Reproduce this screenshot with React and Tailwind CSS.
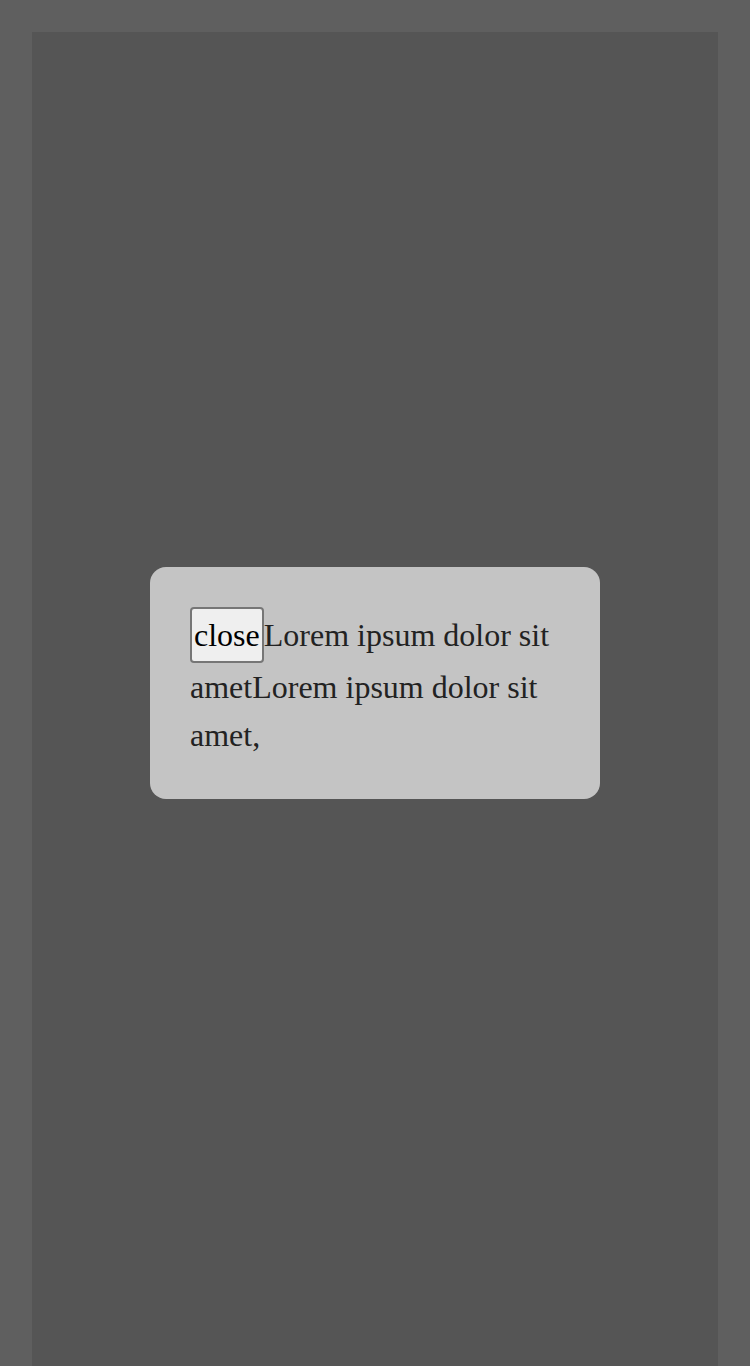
import React from 'react';

const App = () => {
  return (
    <div className="min-h-screen bg-[#5f5f5f] px-8 pt-8 font-['Liberation_Serif',serif]">
      <div className="h-[1334px] bg-[#555555]" />

      <div className="fixed inset-0 flex items-center justify-center">
        <div className="w-[450px] rounded-2xl bg-[#c4c4c4] p-10 text-[32px] leading-[48px] text-[#222222]">
          <button className="inline-block h-[56px] rounded-[4px] border-2 border-[#767676] bg-[#efefef] px-[2px] py-0 font-['Liberation_Serif',serif] text-[32px] leading-[52px] text-black">
            close
          </button>
          Lorem ipsum dolor sit ametLorem ipsum dolor sit amet,
        </div>
      </div>
    </div>
  );
};

export default App;
